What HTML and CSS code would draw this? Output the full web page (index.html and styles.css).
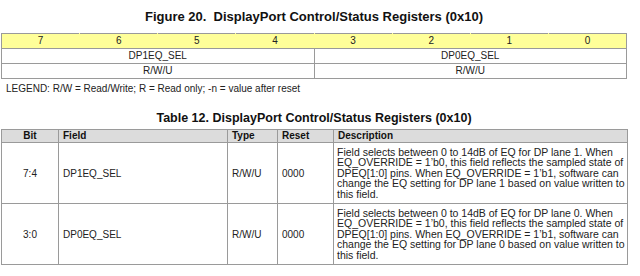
FILE: index.html
```html
<!DOCTYPE html>
<html>
<head>
<meta charset="utf-8">
<link rel="stylesheet" href="styles.css">
</head>
<body>
<div class="page">
  <h1 class="title fig-title">Figure 20.&nbsp; DisplayPort Control/Status Registers (0x10)</h1>
  <table class="reg">
    <tr class="bits">
      <td>7</td><td>6</td><td>5</td><td>4</td><td>3</td><td>2</td><td>1</td><td>0</td>
    </tr>
    <tr class="fields">
      <td colspan="4">DP1EQ_SEL</td><td colspan="4">DP0EQ_SEL</td>
    </tr>
    <tr class="access">
      <td colspan="4">R/W/U</td><td colspan="4" class="nodiv">R/W/U</td>
    </tr>
  </table>
  <p class="legend">LEGEND: R/W = Read/Write; R = Read only; -n = value after reset</p>
  <h2 class="title tbl-title">Table 12. DisplayPort Control/Status Registers (0x10)</h2>
  <table class="desc">
    <colgroup>
      <col class="c-bit"><col class="c-field"><col class="c-type"><col class="c-reset"><col class="c-desc">
    </colgroup>
    <tr class="head">
      <th class="center">Bit</th><th>Field</th><th>Type</th><th>Reset</th><th>Description</th>
    </tr>
    <tr>
      <td class="center">7:4</td>
      <td>DP1EQ_SEL</td>
      <td>R/W/U</td>
      <td>0000</td>
      <td class="text">Field selects between 0 to 14dB of EQ for DP lane 1. When EQ_OVERRIDE = 1’b0, this field reflects the sampled state of DPEQ[1:0] pins. When EQ_OVERRIDE = 1’b1, software can change the EQ setting for DP lane 1 based on value written to this field.</td>
    </tr>
    <tr>
      <td class="center">3:0</td>
      <td>DP0EQ_SEL</td>
      <td>R/W/U</td>
      <td>0000</td>
      <td class="text">Field selects between 0 to 14dB of EQ for DP lane 0. When EQ_OVERRIDE = 1’b0, this field reflects the sampled state of DPEQ[1:0] pins. When EQ_OVERRIDE = 1’b1, software can change the EQ setting for DP lane 0 based on value written to this field.</td>
    </tr>
  </table>
</div>
</body>
</html>
```
FILE: styles.css
```css
html, body {
  margin: 0;
  padding: 0;
  background: #ffffff;
}
body {
  font-family: "Liberation Sans", Arial, sans-serif;
  color: #000;
}
.page {
  width: 626px;
  padding: 0 0 0 1px;
}
.title {
  margin: 0;
  font-weight: bold;
  text-align: center;
  color: #111;
}
.fig-title {
  font-size: 13px;
  line-height: 16px;
  padding-top: 9px;
  padding-bottom: 8px;
  white-space: pre;
}
.tbl-title {
  font-size: 12.5px;
  line-height: 16px;
  padding-top: 15px;
  padding-bottom: 3px;
}
table {
  border-collapse: collapse;
  width: 626px;
  table-layout: fixed;
}
.reg td {
  border: 1px solid #9a9a9a;
  height: 14px;
  padding: 0;
  font-size: 10px;
  line-height: 14px;
  text-align: center;
  color: #222;
}
.reg .bits td {
  background: #ffff99;
  border-left-color: #ffff99;
  border-right-color: #ffff99;
}
.reg .bits td:first-child {
  border-left-color: #9a9a9a;
}
.reg .bits td:last-child {
  border-right-color: #9a9a9a;
}
.reg .access td.nodiv {
  border-left-color: #ffffff;
}
.legend {
  margin: 0;
  padding: 4px 0 0 5px;
  font-size: 10px;
  line-height: 12px;
  color: #222;
}
.c-bit { width: 57px; }
.c-field { width: 169px; }
.c-type { width: 50px; }
.c-reset { width: 56px; }
.c-desc { width: 294px; }
.desc th, .desc td {
  border: 1px solid #9a9a9a;
  font-size: 10px;
  color: #222;
  text-align: left;
  vertical-align: middle;
  padding: 0 4px;
}
.desc th {
  background: #dcdcdc;
  font-weight: bold;
  height: 12px;
  line-height: 12px;
  color: #111;
}
.desc .center {
  text-align: center;
}
.desc td.text {
  font-size: 10.5px;
  line-height: 10.4px;
  padding: 4px 2px 4px 3px;
}
```
